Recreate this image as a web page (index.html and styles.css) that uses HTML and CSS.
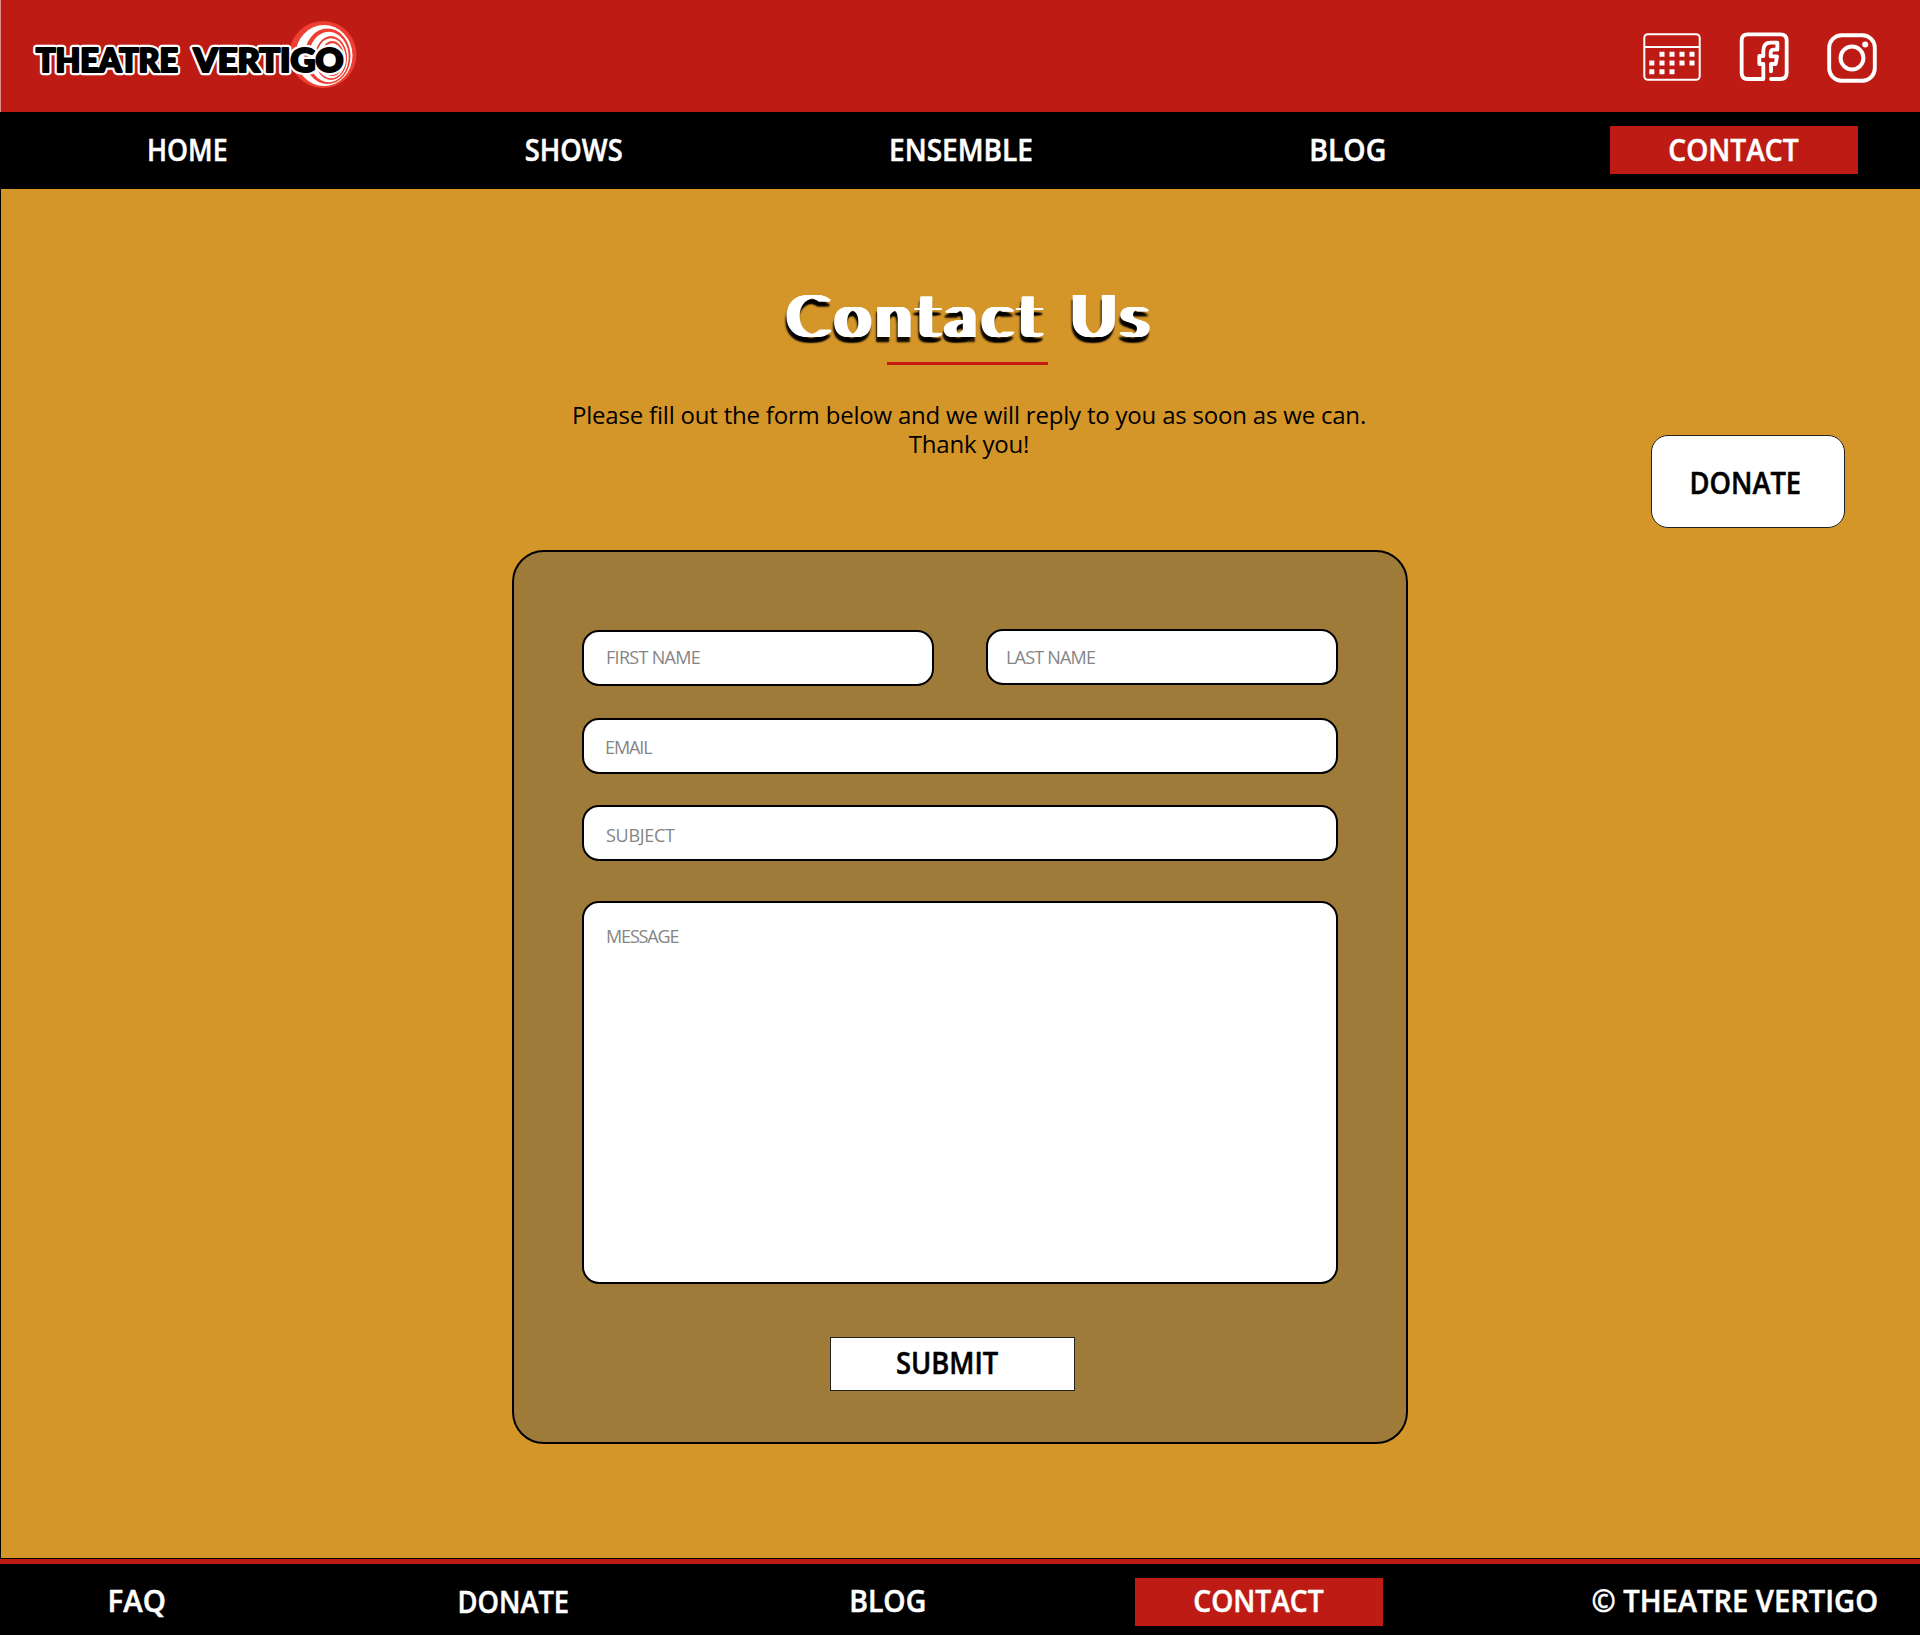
FILE: index.html
```html
<!DOCTYPE html>
<html lang="en">
<head>
<meta charset="utf-8">
<title>Theatre Vertigo - Contact</title>
<link rel="stylesheet" href="styles.css">
</head>
<body>
<header class="banner">
  <a class="logo" href="#" aria-label="Theatre Vertigo">
    <svg width="332" height="72" viewBox="28 18 332 72">
      <circle cx="323" cy="54.500" r="33.500" fill="#ee3e32"/>
      <ellipse cx="324" cy="55.500" rx="28.500" ry="30.500" fill="#fff"/>
      <ellipse cx="327.500" cy="56.300" rx="23" ry="27.800" fill="#ee3e32"/>
      <ellipse cx="328.700" cy="57" rx="20" ry="25.200" fill="#fff"/>
      <ellipse cx="331" cy="58" rx="16" ry="22" fill="#ee3e32"/>
      <ellipse cx="331" cy="58.300" rx="14.700" ry="20" fill="#fff"/>
      <ellipse cx="332.300" cy="58.600" rx="12" ry="17.500" fill="#ee3e32"/>
      <ellipse cx="332.300" cy="58.800" rx="10.700" ry="15.500" fill="#fff"/>
      <ellipse cx="333" cy="59" rx="8.500" ry="13" fill="#ee3e32"/>
      <circle cx="331" cy="61" r="7" fill="#fff"/>
      <g class="logo-text">
        <text class="halo" x="36" y="72" textLength="142" lengthAdjust="spacingAndGlyphs">THEATRE</text>
        <text class="halo" x="193.500" y="72" textLength="150" lengthAdjust="spacingAndGlyphs">VERTIGO</text>
        <g aria-hidden="true">
          <text class="face" x="36" y="72" textLength="142" lengthAdjust="spacingAndGlyphs">THEATRE</text>
          <text class="face" x="193.500" y="72" textLength="150" lengthAdjust="spacingAndGlyphs">VERTIGO</text>
        </g>
      </g>
    </svg>
  </a>
  <div class="social">
    <svg width="58" height="48" viewBox="1643 33 58 48">
      <rect x="1644.300" y="34.200" width="55.400" height="45.600" rx="3.500" fill="none" stroke="#fff" stroke-width="2"/>
      <path d="M1644 47h56" stroke="#fff" stroke-width="2"/>
      <path d="M1659.500 54.300h5M1669.500 54.300h5M1679.500 54.300h5M1689.500 54.300h5M1649.300 63h5M1659.500 63h5M1669.500 63h5M1679.500 63h5M1689.500 63h5M1649.300 71.700h5M1659.500 71.700h5M1669.500 71.700h5" stroke="#fff" stroke-width="5"/>
    </svg>
    <svg width="50" height="50" viewBox="417 96 150 150">
      <path d="M490 237H443Q425 237 425 219V121Q425 103 443 103H541Q560 103 560 121V219Q560 237 541 237H513M490 237V192H478V168H490V152Q490 128 512 128H532V149H522Q512 149 512 159V169H531L527 192H513V214" fill="none" stroke="#fff" stroke-width="11.500" stroke-linejoin="round" stroke-linecap="round"/>
    </svg>
    <svg width="50" height="50" viewBox="1827 33 50 50">
      <rect x="1829.200" y="35.200" width="45.600" height="45.600" rx="12.500" fill="none" stroke="#fff" stroke-width="3.900"/>
      <circle cx="1852" cy="58" r="11.400" fill="none" stroke="#fff" stroke-width="4"/>
      <circle cx="1865.200" cy="44.600" r="3" fill="#fff"/>
    </svg>
  </div>
</header>
<nav class="menu">
  <a class="item" href="#"><span class="label w-home">HOME</span></a>
  <a class="item" href="#"><span class="label w-shows">SHOWS</span></a>
  <a class="item" href="#"><span class="label w-ensemble">ENSEMBLE</span></a>
  <a class="item" href="#"><span class="label w-blog">BLOG</span></a>
  <a class="item active" href="#"><span class="label w-contact">CONTACT</span></a>
</nav>
<main class="page">
  <h1 class="title">Contact Us</h1>
  <div class="rule"></div>
  <p class="intro">Please fill out the form below and we will reply to you as soon as we can.<br>Thank you!</p>
  <a class="donate" href="#"><span class="label w-donate">DONATE</span></a>
  <form class="form">
    <div class="names">
      <input class="field first" placeholder="FIRST NAME">
      <input class="field last" placeholder="LAST NAME">
    </div>
    <input class="field email" placeholder="EMAIL">
    <input class="field subject" placeholder="SUBJECT">
    <textarea class="field message" placeholder="MESSAGE"></textarea>
    <button class="submit" type="button"><span class="label w-submit">SUBMIT</span></button>
  </form>
</main>
<footer class="footer">
  <a class="item" href="#"><span class="label w-faq">FAQ</span></a>
  <a class="item low" href="#"><span class="label w-donate">DONATE</span></a>
  <a class="item third" href="#"><span class="label w-blog">BLOG</span></a>
  <a class="item active" href="#"><span class="label w-contact">CONTACT</span></a>
  <span class="item copyright"><span class="label w-copy">© THEATRE VERTIGO</span></span>
</footer>
</body>
</html>
```
FILE: styles.css
```css
* { box-sizing: border-box; }
body {
  margin: 0;
  width: 1920px;
  height: 1635px;
  overflow: hidden;
  display: flex;
  flex-direction: column;
  background: #000;
  font-family: "Open Sans", "Noto Sans", sans-serif;
}
a { color: inherit; text-decoration: none; }

.banner {
  height: 112px;
  display: flex;
  justify-content: space-between;
  padding: 18px 43px 0 27px;
  background: #bd1b13;
  border-left: 1px solid #dd8d89;
}
.logo, .logo svg { display: block; }
.logo svg { overflow: visible; }
.logo-text {
  font-family: Lato, sans-serif;
  font-weight: 900;
  font-size: 32px;
  stroke-linejoin: round;
}
.halo { fill: #fff; stroke: #fff; stroke-width: 6.500px; }
.face { fill: #000; stroke: #000; stroke-width: 2.200px; }
.social { display: flex; align-items: flex-start; padding-top: 15px; }
.social svg { display: block; }
.social svg:nth-child(2) { margin: -1px 38px 0; }

.menu {
  height: 77px;
  flex: none;
  display: flex;
  justify-content: space-between;
  padding: 14px 62px 0 63px;
}
.item {
  width: 248px;
  height: 48px;
  flex: none;
  line-height: 48px;
  text-align: center;
  color: #fff;
}
.active { background: #bd1b13; }
.active .label { margin-left: -2px; }
.label {
  display: inline-block;
  white-space: nowrap;
  font-size: 30px;
  font-weight: 600;
  -webkit-text-stroke: .5px currentColor;
}
.w-home { transform: scaleX(.89); }
.w-shows { transform: scaleX(.91); }
.w-ensemble { transform: scaleX(.935); }
.w-blog { transform: scaleX(.945); }
.w-contact { transform: scaleX(.938); }
.w-donate { transform: scaleX(.91); }
.w-submit { transform: scaleX(.91); }
.w-copy { transform: scaleX(.97); }
.w-faq { transform: scaleX(.98); }

.page {
  position: relative;
  height: 1370px;
  flex: none;
  background: #d59629;
  border-left: 1px solid #000;
  border-bottom: 1px solid #000;
}
.title {
  margin: 0 0 0 782px;
  padding-top: 91px;
  line-height: 68px;
  font-family: Lato, sans-serif;
  font-weight: 300;
  font-size: 60px;
  letter-spacing: 7.900px;
  color: #fff;
  white-space: nowrap;
  text-shadow: 1px 0 #fff, 2px 0 #fff, 3px 0 #fff, 4px 0 #fff, 5px 0 #fff, 6px 0 #fff, 7px 0 #fff, 8px 0 #fff, 9px 0 #fff, 10px 0 #fff,
    -1px 5px 2px #000, 1px 5px 2px #000, 3px 5px 2px #000, 5px 5px 2px #000, 7px 5px 2px #000, 9px 5px 2px #000;
}
.rule { width: 161px; height: 3px; margin: 14px 0 0 886px; background: #c41a12; }
.intro {
  width: 900px;
  margin: 35px 0 0 518px;
  font-size: 24px;
  line-height: 29px;
  letter-spacing: -.2px;
  text-align: center;
  color: #000;
}
.donate {
  position: absolute;
  left: 1650px;
  top: 246px;
  width: 194px;
  height: 93px;
  padding-right: 6px;
  border: 1px solid #222;
  border-radius: 17px;
  background: #fff;
  line-height: 94px;
  text-align: center;
}
.form {
  width: 896px;
  height: 894px;
  margin: 92px 0 0 511px;
  padding: 77px 68px 0;
  border: 2px solid #000;
  border-radius: 32px;
  background: #9e7b38;
  display: flex;
  flex-direction: column;
}
.names { display: flex; justify-content: space-between; }
.field {
  display: block;
  width: 756px;
  height: 56px;
  margin: 0 0 31px;
  padding: 0 22px;
  border: 2px solid #000;
  border-radius: 17px;
  background: #fff;
  font: 400 18px "Open Sans", "Noto Sans", sans-serif;
  letter-spacing: -.7px;
  resize: none;
}
.field::placeholder { color: #858585; opacity: 1; }
.names .field { width: 352px; margin-bottom: 32px; padding-bottom: 2px; }
.names .first { margin-top: 1px; }
.names .last { padding-left: 18px; padding-bottom: 0; letter-spacing: -.8px; }
.email { letter-spacing: -1.100px; padding-left: 21px; padding-top: 2px; }
.subject { letter-spacing: -.3px; margin-bottom: 40px; padding-top: 4px; }
.message { height: 383px; padding-top: 21px; letter-spacing: -1.150px; margin-bottom: 53px; }
.submit {
  width: 245px;
  height: 54px;
  margin-left: 248px;
  padding: 0 11px 0 0;
  border: 1px solid #222;
  background: #fff;
  font-family: inherit;
  line-height: 50px;
  color: #000;
}
.footer {
  height: 76px;
  flex: none;
  display: flex;
  gap: 126px;
  padding: 14px 0 0 13px;
  border-top: 5px solid #bd1b13;
}
.footer .label { position: relative; top: -1px; }
.low { padding: 1px 0 0 5px; }
.third { padding-left: 6px; }
.copyright { margin-left: -9px; width: 470px; }
```
